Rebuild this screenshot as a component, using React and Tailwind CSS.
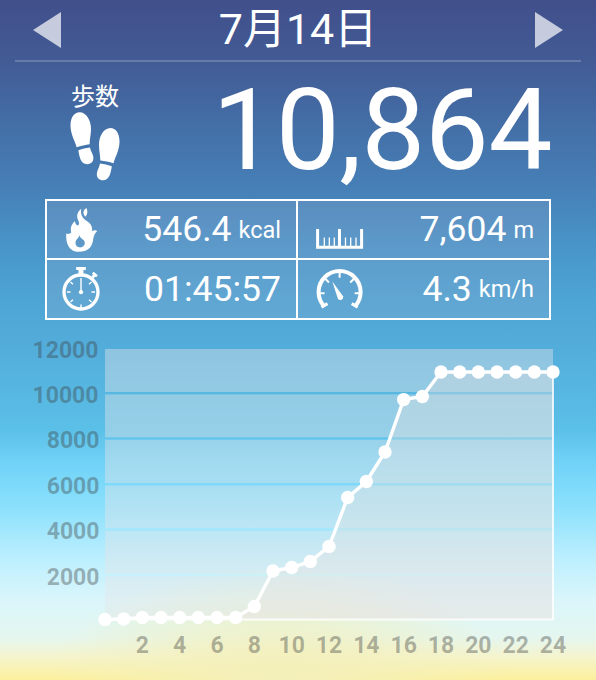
import React from "react";

// cumulative steps, one value per hour (0h -> 24h)
const hourly = [
  0, 20, 90, 90, 90, 90, 90, 90, 575, 2145, 2300, 2570, 3230, 5400, 6105, 7410,
  9730, 9865, 10950, 10950, 10950, 10950, 10950, 10950, 10950,
];

const LEFT = 105;
const RIGHT = 553;
const TOP = 19;
const BOTTOM = 289.5;

const px = (hour) => LEFT + (hour * (RIGHT - LEFT)) / 24;
const py = (steps) => BOTTOM - steps * 0.0226;

const gridLines = [63.2, 108.5, 154.3, 199.5, 245];

const yLabels = [
  { label: "12000", x: 98.5, y: 28 },
  { label: "10000", x: 98.5, y: 73 },
  { label: "8000", x: 99.5, y: 118 },
  { label: "6000", x: 99.5, y: 164 },
  { label: "4000", x: 99.5, y: 209.3 },
  { label: "2000", x: 99.5, y: 255 },
];

function FootstepsIcon() {
  return (
    <svg width="50" height="70" viewBox="0 0 50 70" fill="#fff">
      <path d="M6.500 36.200C5.900 31.500.5 24 .5 14.500C.5 6 4.500 1.200 9.500 1.200C16.500 1.200 21 9.500 21 17.500C21 24 19.700 27.500 19.700 33.200C15.500 33.700 11 34.800 6.500 36.200Z" />
      <path d="M8.300 39.300Q14 37.200 20 36.500C20.600 40.500 23.400 43 23.400 47C23.400 51 20.600 53.200 17.300 53.200C10.500 53.200 9.500 46 8.300 39.300Z" />
      <path d="M43.600 52.300C44.300 47.500 49.500 40 49.500 30.500C49.500 22 45.500 17 40.500 17C33.500 17 29 25.500 29 33.500C29 40 30.300 43.800 30.300 49.400C34.500 49.800 39 50.800 43.600 52.300Z" />
      <path d="M41.800 55.200Q36 53.200 30 52.400C29.500 56.500 26.800 59.200 26.800 63.200C26.800 67 29.500 69.200 32.800 69.200C39.500 69.200 40.800 62 41.800 55.200Z" />
    </svg>
  );
}

function FlameIcon() {
  return (
    <svg width="34" height="44" viewBox="0 0 34 44" fill="#fff">
      <path
        fillRule="evenodd"
        d="M16.200.8C11.500 4.500 11.500 9 13.400 12.700C15 16.300 13.300 18.500 11.500 16.800C10.400 15.700 10.300 14.300 9.800 13.200C6 16.800 5.200 20.300 6.300 24.600C4.700 26.300 2.700 26 1.300 25.500C.6 34.500 3.500 43.800 14 43.800C22.500 43.800 26.800 39.500 28 32.500C28.500 29.500 29 25.500 32.300 22.900C30.200 21.700 28.700 22.400 27.200 23.300C27.400 17.500 25.300 15 21 12.400C16.500 9.300 15.500 5.500 16.200.8ZM14.700 27.300C14.700 30.800 19.800 31.100 19.800 35C19.800 37.700 17.700 39.400 15.200 39.400C12.600 39.400 10.500 37.500 10.500 34.700C10.500 31.800 13.400 30.400 14.700 27.300Z"
      />
      <path d="M21.400 0C17.500 2.500 17.800 5.600 20.200 8.700C22.800 6.500 22.800 3.300 21.400 0Z" />
    </svg>
  );
}

function StopwatchIcon() {
  return (
    <svg width="38" height="44" viewBox="0 0 38 44" fill="none" stroke="#fff">
      <circle cx="19" cy="25" r="17" strokeWidth="3.300" />
      <path d="M14.200 1.500H23.800" strokeWidth="3" />
      <path d="M19 2V8" strokeWidth="5" />
      <path d="M30.500 10.500L33 7.500" strokeWidth="3" />
      <path d="M30.800 5.700L35 9.300" strokeWidth="2.600" />
      <path
        d="M19 37.500V41M5 25H8.500M29.500 25H33M8.500 15L11 17.200M29.500 15L27 17.200M8.500 35L11 32.800M29.500 35L27 32.800"
        strokeWidth="1.400"
      />
      <path d="M19 11V25" strokeWidth="1.400" />
      <circle cx="19" cy="25.200" r="2.100" fill="#fff" stroke="none" />
    </svg>
  );
}

function RulerIcon() {
  return (
    <svg width="48" height="20" viewBox="0 0 48 20" fill="none" stroke="#fff">
      <path d="M1.600 0V18.300H45.600V0" strokeWidth="3" />
      <path d="M23.500 0V18" strokeWidth="3" />
      <path
        d="M8.300 8.500V18M13.300 8.500V18M18.300 8.500V18M29.500 8.500V18M34.700 8.500V18M40 8.500V18"
        strokeWidth="1.300"
      />
    </svg>
  );
}

function SpeedIcon() {
  return (
    <svg width="48" height="40" viewBox="0 0 48 40" fill="none" stroke="#fff">
      <path d="M8.200 37.300A21 21 0 1 1 39 37.300" strokeWidth="4" />
      <path
        d="M5.500 38.300L11.500 34.600M41.700 38.300L35.700 34.600"
        strokeWidth="3"
      />
      <path
        d="M23.600 4V8.700M4 24.300H8.500M38.700 24.300H43.200M9.500 10L13 13.500M37.700 10L34.200 13.500"
        strokeWidth="2"
      />
      <path
        d="M16.300 12.500L27.200 27.500A3 3 0 0 1 22 30Z"
        fill="#fff"
        stroke="none"
      />
    </svg>
  );
}

function StatCell({ icon, value, unit, className }) {
  return (
    <div
      className={`flex items-center justify-between border-white pr-[15px] ${className}`}
    >
      {icon}
      <div className="flex items-center gap-[7px] pt-px whitespace-nowrap">
        <span className="text-[35.500px] leading-none">{value}</span>
        {unit && (
          <span className="pt-px text-[23.500px] leading-none">{unit}</span>
        )}
      </div>
    </div>
  );
}

function StepsChart() {
  const points = hourly.map((v, i) => `${px(i)},${py(v)}`).join(" ");
  const edges = [TOP, ...gridLines, BOTTOM];

  return (
    <svg width="596" height="350" viewBox="0 0 596 350" className="block">
      {/* bands, the gaps between them are the grid lines */}
      {edges.slice(0, -1).map((y, i) => {
        const start = i === 0 ? y : y + 1.2;
        const end = i === edges.length - 2 ? BOTTOM : edges[i + 1] - 1.2;
        return (
          <rect
            key={y}
            x={LEFT}
            y={start}
            width={RIGHT - LEFT}
            height={end - start}
            fill="#e4e4e8"
            fillOpacity="0.42"
          />
        );
      })}

      <polygon
        points={`${points} ${RIGHT},${BOTTOM} ${LEFT},${BOTTOM}`}
        fill="#ebe3e0"
        fillOpacity="0.33"
      />
      <path
        d={`M${LEFT} ${BOTTOM}H${RIGHT}V${py(10950)}`}
        fill="none"
        stroke="#fff"
        strokeOpacity="0.8"
        strokeWidth="2"
      />
      <polyline points={points} fill="none" stroke="#fff" strokeWidth="3.400" />
      {hourly.map((v, i) => (
        <circle key={i} cx={px(i)} cy={py(v)} r="6.700" fill="#fff" />
      ))}

      <g fontSize="23" fontWeight="700" fill="#3c3c3c" fillOpacity="0.38">
        {yLabels.map((l) => (
          <text key={l.label} x={l.x} y={l.y} textAnchor="end">
            {l.label}
          </text>
        ))}
        {[2, 4, 6, 8, 10, 12, 14, 16, 18, 20, 22, 24].map((h) => (
          <text key={h} x={px(h)} y="323" textAnchor="middle">
            {h}
          </text>
        ))}
      </g>
    </svg>
  );
}

export default function App() {
  return (
    <div className="flex h-[680px] w-[596px] flex-col overflow-hidden bg-[radial-gradient(ellipse_230px_115px_at_280px_680px,#f4f0bb_0%,#f4f0bba0_45%,#f4f0bb00_100%),linear-gradient(180deg,#414f8b_0px,#425c96_65px,#4470a8_130px,#467fb6_185px,#4896ca_250px,#4da5d5_300px,#52abd9_340px,#5bc0e8_430px,#70d2f7_462px,#87dffc_502px,#bdeffe_560px,#daf6fb_600px,#e5f6ef_638px,#f5f4cd_657px,#fcf09c_680px)] font-['Roboto','Noto_Sans_CJK_JP',sans-serif] text-white">
      <header className="mx-[15px] flex h-[62px] shrink-0 items-center justify-between border-b-2 border-white/20 px-[18px]">
        <svg width="28" height="36" viewBox="0 0 28 36">
          <path d="M0 18L28 0V36Z" fill="#fff" fillOpacity="0.7" />
        </svg>
        <h1 className="pb-[2px] text-[43px] leading-[58px]">7月14日</h1>
        <svg width="28" height="36" viewBox="0 0 28 36">
          <path d="M28 18L0 0V36Z" fill="#fff" fillOpacity="0.7" />
        </svg>
      </header>

      <section className="flex h-[137px] shrink-0 justify-between pr-[44px] pl-[70px]">
        <div className="flex w-[50px] flex-col items-center pt-[22px]">
          <span className="text-[24px] leading-[27px] whitespace-nowrap">
            歩数
          </span>
          <FootstepsIcon />
        </div>
        <div className="pt-[11px] text-[114px] leading-[115px] tracking-[-0.500px]">
          10,864
        </div>
      </section>

      <section className="mx-[45px] grid h-[121px] shrink-0 grid-cols-[251px_251px] grid-rows-[59px_58px] border-2 border-white bg-[#a2abcd]/22">
        <StatCell
          className="border-r-2 border-b-2 pl-[18px]"
          icon={<FlameIcon />}
          value="546.4"
          unit="kcal"
        />
        <StatCell
          className="border-b-2 pl-[18px]"
          icon={
            <div className="pt-[18px]">
              <RulerIcon />
            </div>
          }
          value="7,604"
          unit="m"
        />
        <StatCell
          className="border-r-2 pl-[15px]"
          icon={<StopwatchIcon />}
          value="01:45:57"
        />
        <StatCell
          className="pl-[18px]"
          icon={<SpeedIcon />}
          value="4.3"
          unit="km/h"
        />
      </section>

      <section className="mt-[10px] shrink-0">
        <StepsChart />
      </section>
    </div>
  );
}
